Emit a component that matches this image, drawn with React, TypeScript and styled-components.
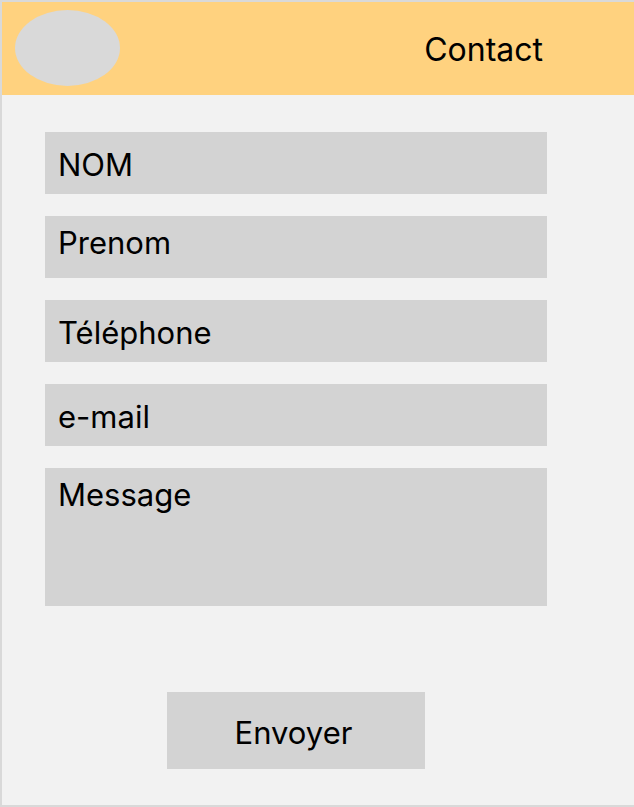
import React from 'react';
import styled, { createGlobalStyle } from 'styled-components';

const GlobalStyle = createGlobalStyle`
  html, body {
    margin: 0;
    padding: 0;
    background: #f2f2f2;
  }
  * {
    box-sizing: border-box;
  }
`;

const Frame = styled.div`
  width: 634px;
  height: 807px;
  background: #f2f2f2;
  border-top: 2px solid #d9d9d9;
  border-left: 2px solid #d9d9d9;
  border-bottom: 2px solid #d9d9d9;
  font-family: Inter, 'Liberation Sans', sans-serif;
  color: #000;
  display: flex;
  flex-direction: column;
`;

const Header = styled.header`
  height: 93px;
  background: #ffd27f;
  display: flex;
  align-items: flex-start;
  padding-left: 13px;
  padding-right: 91px;
`;

const Logo = styled.div`
  width: 105px;
  height: 76px;
  margin-top: 8px;
  border-radius: 50%;
  background: #d9d9d9;
`;

const Title = styled.h1`
  margin: 32px 0 0 auto;
  font-size: 32px;
  font-weight: 400;
  line-height: 1;
`;

const Form = styled.form`
  display: flex;
  flex-direction: column;
  gap: 22px;
  padding: 37px 0 0 43px;
`;

const Field = styled.div<{ tall?: boolean; top?: boolean }>`
  width: 502px;
  height: ${p => (p.tall ? '138px' : '62px')};
  background: #d3d3d3;
  padding: ${p => (p.top ? '11px' : '17px')} 13px 0;
  font-size: 31px;
  line-height: 1;
`;

const Actions = styled.div`
  display: flex;
  padding: 86px 0 0 165px;
`;

const SubmitButton = styled.button`
  width: 258px;
  height: 77px;
  border: none;
  background: #d3d3d3;
  font-family: inherit;
  font-size: 31px;
  line-height: 1;
  color: #000;
  padding: 4px 5px 0 0;
`;

export default function App() {
  return (
    <>
      <GlobalStyle />
      <Frame>
        <Header>
          <Logo />
          <Title>Contact</Title>
        </Header>
        <Form onSubmit={e => e.preventDefault()}>
          <Field>NOM</Field>
          <Field top>Prenom</Field>
          <Field>Téléphone</Field>
          <Field>e-mail</Field>
          <Field tall top>Message</Field>
        </Form>
        <Actions>
          <SubmitButton type="submit">Envoyer</SubmitButton>
        </Actions>
      </Frame>
    </>
  );
}
